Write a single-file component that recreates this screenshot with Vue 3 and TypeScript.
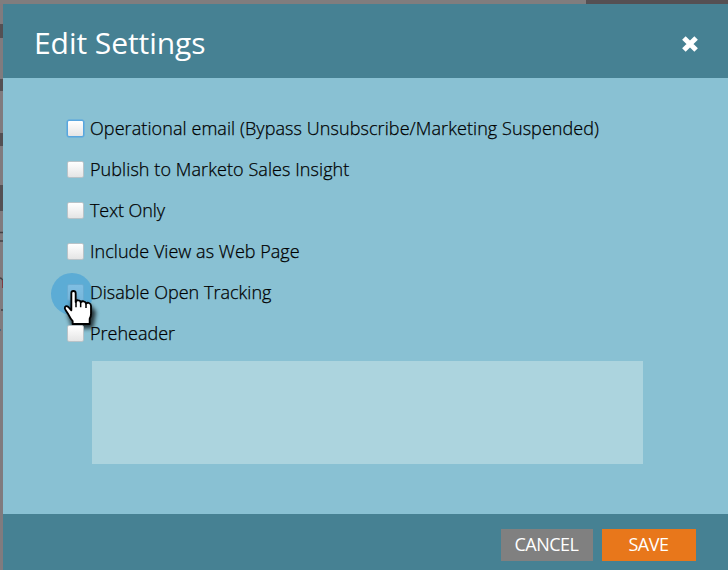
<script setup lang="ts">
import { ref } from 'vue'

interface Option {
  label: string
  checked: boolean
  tracking: number
  highlighted?: boolean
  target?: boolean
}

const options = ref<Option[]>([
  { label: 'Operational email (Bypass Unsubscribe/Marketing Suspended)', checked: false, tracking: 0.08, highlighted: true },
  { label: 'Publish to Marketo Sales Insight', checked: false, tracking: 0.08 },
  { label: 'Text Only', checked: false, tracking: -0.1 },
  { label: 'Include View as Web Page', checked: false, tracking: 0.03 },
  { label: 'Disable Open Tracking', checked: false, tracking: 0.02, target: true },
  { label: 'Preheader', checked: false, tracking: 0 },
])
const preheader = ref('')
</script>

<template>
  <div class="page">
    <div class="topbar"></div>
    <svg class="edge" width="3" height="566" viewBox="0 4 3 566">
      <path d="M0 24h3v14H0zM0 79h3v12H0zM0 133h3v13H0zM0 185h3v26H0z" fill="#545053" />
      <path d="M0 232.5h3M0 241h3M0 278q2 0 3 3M1 310h2" stroke="#454245" fill="none" stroke-width="1.5" />
      <path d="M2.5 280v8" stroke="#803c42" />
      <path d="M0 330h1" stroke="#4c667c" stroke-width="2" />
    </svg>
    <section class="dialog">
      <header class="head">
        <h1>Edit Settings</h1>
        <button class="close" type="button" aria-label="Close">
          <svg width="18" height="18" viewBox="0 0 18 18">
            <path d="M2.9 2.9L15.1 15.1M15.1 2.9L2.9 15.1" stroke="#fff" stroke-width="5" />
          </svg>
        </button>
      </header>
      <main class="body">
        <label v-for="o in options" :key="o.label" class="row">
          <span class="boxwrap">
            <input v-model="o.checked" type="checkbox" class="box" :class="{ highlighted: o.highlighted }" />
            <svg v-if="o.target" class="pointer" width="80" height="90" viewBox="0 0 240 270">
              <defs>
                <filter id="shade" x="-30%" y="-30%" width="170%" height="170%">
                  <feGaussianBlur stdDeviation="7" />
                </filter>
              </defs>
              <circle cx="96" cy="102" r="63" fill="#48a2d5" opacity=".7" />
              <path d="M103 105L112 132 151 136 168 155 159 205 98 207 83 163Z" fill="#000" opacity=".75" filter="url(#shade)" />
              <path
                d="M94 99Q94 93 100 93 107 93 107 100V126Q109 120 115 121 121 121 122 127 125 123 131 124 137 125 138 131 142 127 147 129 153 131 153 138V162Q153 170 149 176V192H98V183Q91 175 85 163L77 151Q73 145 75 141 79 136 85 141L94 151Z"
                fill="#fff" stroke="#000" stroke-width="5.5" stroke-linejoin="round"
              />
              <path d="M108 122V142M122 127V142M138 131V144" stroke="#000" stroke-width="4.5" fill="none" />
            </svg>
          </span>
          <span class="text" :style="{ letterSpacing: o.tracking + 'px' }">{{ o.label }}</span>
        </label>
        <textarea v-model="preheader" class="preheader" aria-label="Preheader"></textarea>
      </main>
      <footer class="foot">
        <button type="button" class="btn cancel">CANCEL</button>
        <button type="button" class="btn save">SAVE</button>
      </footer>
    </section>
  </div>
</template>

<style>
body {
  overflow: hidden;
}
</style>

<style scoped>
.page {
  display: grid;
  grid-template: 4px 566px / 3px 725px;
  width: 728px;
  height: 570px;
  background: #807b7e;
  font-family: 'Open Sans', sans-serif;
}
.topbar {
  grid-area: 1 / 1 / 2 / 3;
  background: linear-gradient(90deg, #807d7e 586px, #555053 586px);
}
.edge {
  grid-area: 2 / 1;
}
.dialog {
  grid-area: 2 / 2;
  display: flex;
  flex-direction: column;
}
.head {
  display: flex;
  align-items: center;
  justify-content: space-between;
  height: 74px;
  padding: 0 29px 0 31px;
  box-sizing: border-box;
  background: #468193;
}
h1 {
  margin: 4px 0 0;
  color: #fff;
  font-size: 30px;
  font-weight: 400;
  line-height: 40px;
  letter-spacing: -0.06px;
}
.close {
  display: flex;
  margin-top: 6px;
  padding: 0;
  border: 0;
  background: none;
}
.body {
  flex: 1;
  padding: 29px 0 0 64px;
  background: #89c1d3;
}
.row {
  display: flex;
  align-items: center;
  height: 41px;
  color: #000;
  font-size: 18px;
  font-weight: 300;
}
.text {
  position: relative;
  z-index: 1;
  -webkit-text-stroke: 0.25px #000;
  white-space: nowrap;
}
.boxwrap {
  position: relative;
  display: flex;
  width: 23px;
  margin-top: 2px;
}
.box {
  appearance: none;
  box-sizing: border-box;
  width: 17px;
  height: 17px;
  margin: 0;
  border: 1px solid #b9c3c8;
  border-radius: 2px;
  background: linear-gradient(#fff, #e5e5e5);
}
.box.highlighted {
  border: 1px solid #58a6df;
  box-shadow: 0 0 0 0.5px #58a6df;
}
.pointer {
  position: absolute;
  left: -27px;
  top: -24px;
}
.preheader {
  display: block;
  box-sizing: border-box;
  width: 551px;
  height: 103px;
  margin: 8px 0 0 25px;
  border: 0;
  resize: none;
  background: #acd4de;
}
.foot {
  display: flex;
  justify-content: flex-end;
  gap: 9px;
  box-sizing: border-box;
  height: 56px;
  padding: 15px 32px 9px 0;
  background: #468193;
}
.btn {
  box-sizing: border-box;
  padding: 0 1px 2px 0;
  border: 0;
  color: #fff;
  font: 400 18px/30px 'Open Sans', sans-serif;
  letter-spacing: -0.5px;
}
.cancel {
  width: 92px;
  background: #808080;
}
.save {
  width: 94px;
  background: #e8771b;
}
</style>
